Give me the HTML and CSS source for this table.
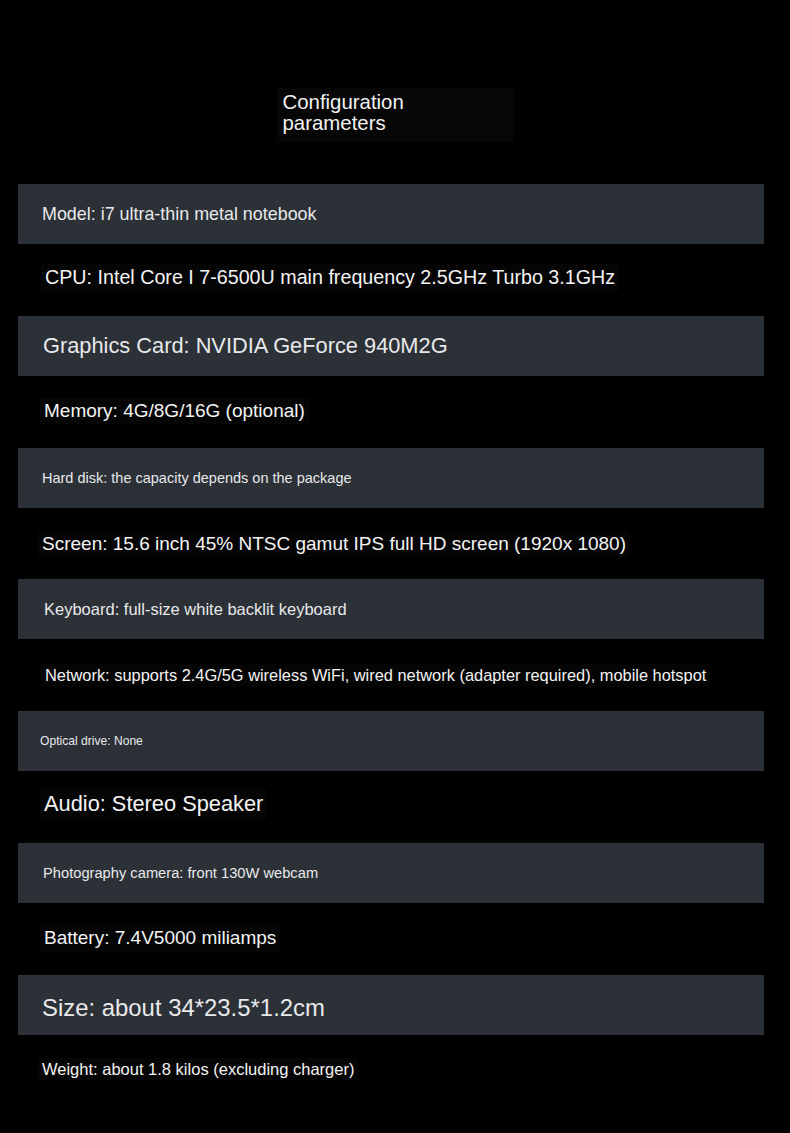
FILE: index.html
```html
<!DOCTYPE html>
<html lang="en">
<head>
<meta charset="utf-8">
<title>Configuration parameters</title>
<link rel="stylesheet" href="styles.css">
</head>
<body>
<div class="page">
  <header class="head">
    <h1 class="title">Configuration<br>parameters</h1>
  </header>
  <ul class="specs">
    <li class="row band"><span class="t s18 i42">Model: i7 ultra-thin metal notebook</span></li>
    <li class="row plain up6"><span class="t s197 i45">CPU: Intel Core I 7-6500U main frequency 2.5GHz Turbo 3.1GHz</span></li>
    <li class="row band"><span class="t s218 i43">Graphics Card: NVIDIA GeForce 940M2G</span></li>
    <li class="row plain up2"><span class="t s19 i44">Memory: 4G/8G/16G (optional)</span></li>
    <li class="row band"><span class="t s145 i42">Hard disk: the capacity depends on the package</span></li>
    <li class="row plain short"><span class="t s19 i42">Screen: 15.6 inch 45% NTSC gamut IPS full HD screen (1920x 1080)</span></li>
    <li class="row band"><span class="t s165 i44">Keyboard: full-size white backlit keyboard</span></li>
    <li class="row plain"><span class="t s164 i45">Network: supports 2.4G/5G wireless WiFi, wired network (adapter required), mobile hotspot</span></li>
    <li class="row band"><span class="t s12 i40">Optical drive: None</span></li>
    <li class="row plain up6"><span class="t s218 i44">Audio: Stereo Speaker</span></li>
    <li class="row band"><span class="t s147 i43">Photography camera: front 130W webcam</span></li>
    <li class="row plain up2"><span class="t s19 i44">Battery: 7.4V5000 miliamps</span></li>
    <li class="row band down6"><span class="t s24 i42">Size: about 34*23.5*1.2cm</span></li>
    <li class="row plain up2"><span class="t s165 i42">Weight: about 1.8 kilos (excluding charger)</span></li>
  </ul>
</div>
</body>
</html>
```

FILE: styles.css
```css
* { box-sizing: border-box; }
html, body {
  margin: 0;
  padding: 0;
  background: #000;
}
.page {
  width: 790px;
  min-height: 1133px;
  background: #000;
  font-family: "Liberation Sans", Arial, sans-serif;
  color: #ececec;
  padding-top: 88px;
}
.head {
  display: flex;
  justify-content: center;
  margin-bottom: 42px;
}
.title {
  width: 237px;
  height: 54px;
  margin: 0;
  padding: 4px 0 0 6px;
  background: #060606;
  font-weight: normal;
  font-size: 20.4px;
  line-height: 20.5px;
  color: #f2f2f2;
}
.specs {
  list-style: none;
  margin: 0 0 0 18px;
  padding: 0;
  width: 746px;
}
.row {
  display: flex;
  align-items: center;
  white-space: nowrap;
}
.band {
  height: 60px;
  background: #2c3037;
  color: #e8e9ea;
}
.plain {
  height: 72px;
  color: #f3f3f3;
}
.plain.short { height: 71px; }
.up2 { padding-bottom: 3px; }
.up6 { padding-bottom: 6px; }
.down6 { padding-top: 6px; }
.plain .t {
  background: #050505;
  padding: 2px 4px;
}
.s12 { font-size: 12.1px; }
.s145 { font-size: 14.5px; }
.s147 { font-size: 14.7px; }
.s164 { font-size: 16.4px; }
.s165 { font-size: 16.5px; }
.s18 { font-size: 17.9px; }
.s19 { font-size: 19px; }
.s197 { font-size: 19.7px; }
.s218 { font-size: 21.8px; }
.s24 { font-size: 23.9px; }
.band .i40 { margin-left: 22px; }
.band .i42 { margin-left: 24px; }
.band .i43 { margin-left: 25px; }
.band .i44 { margin-left: 26px; }
.plain .i42 { margin-left: 20px; }
.plain .i44 { margin-left: 22px; }
.plain .i45 { margin-left: 23px; }
```
